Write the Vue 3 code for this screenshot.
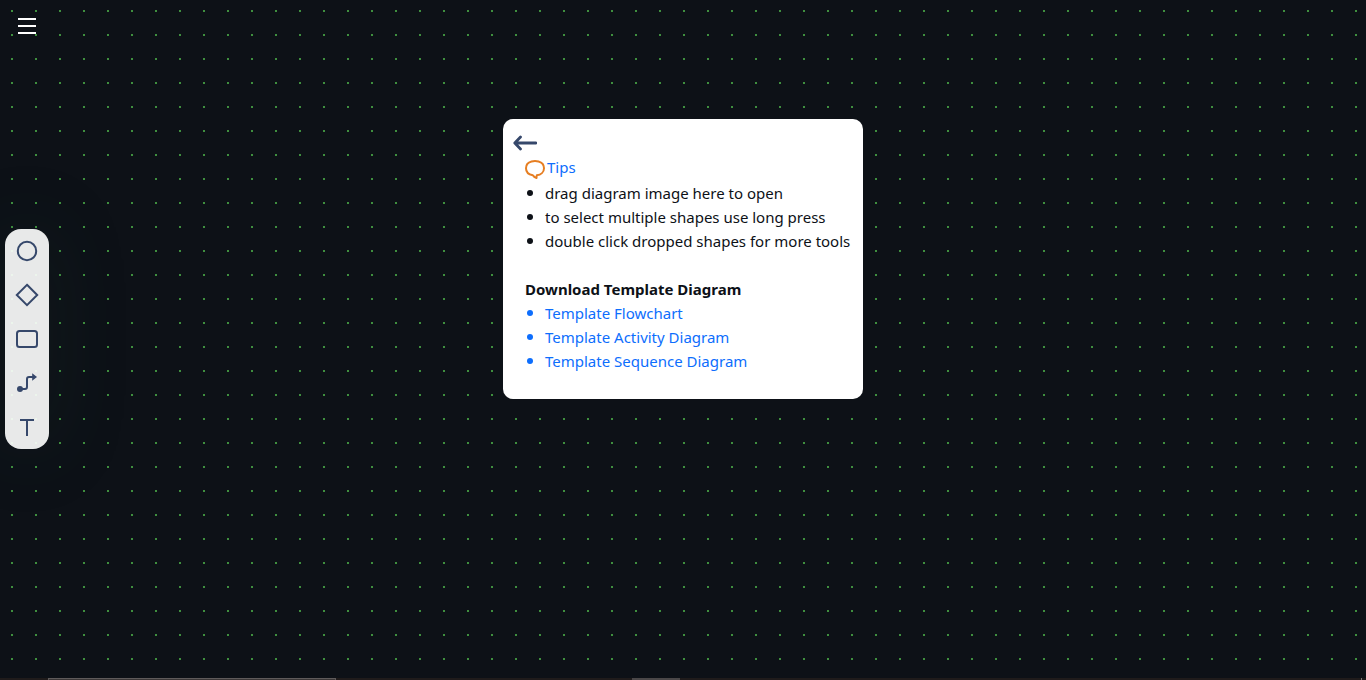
<script setup>
const tips = [
  'drag diagram image here to open',
  'to select multiple shapes use long press',
  'double click dropped shapes for more tools',
]
const templates = ['Template Flowchart', 'Template Activity Diagram', 'Template Sequence Diagram']
</script>

<template>
  <main class="canvas">
    <button class="menu" aria-label="Menu">
      <svg width="18" height="16" viewBox="0 0 18 16" fill="#fff">
        <rect width="18" height="2" /><rect y="7" width="18" height="2" /><rect y="14" width="18" height="2" />
      </svg>
    </button>

    <nav class="tools" aria-label="Shapes">
      <button aria-label="Circle">
        <svg viewBox="0 0 24 24"><circle cx="12" cy="12" r="9.2" /></svg>
      </button>
      <button aria-label="Diamond">
        <svg viewBox="0 0 24 24"><path d="M12 1.800 22.200 12 12 22.200 1.800 12Z" /></svg>
      </button>
      <button aria-label="Rectangle">
        <svg viewBox="0 0 24 24"><rect x="2" y="4" width="20" height="16" rx="2.5" /></svg>
      </button>
      <button aria-label="Connector">
        <svg viewBox="0 0 24 24">
          <circle class="solid" cx="5" cy="18" r="3" />
          <path d="M5 18H10Q12 18 12 16V8Q12 6 14 6H18" />
          <path class="solid" d="M17.200 2.200 22 6 17.200 9.800Z" />
        </svg>
      </button>
      <button aria-label="Text">
        <svg viewBox="0 0 24 24"><path d="M5 5H19M12 5V21" /></svg>
      </button>
    </nav>

    <section class="card">
      <button class="back" aria-label="Back">
        <svg width="24" height="16" viewBox="0 0 24 16">
          <path d="M7.500 2 1.800 8 7.500 14M2 8H23" fill="none" stroke="#36486b" stroke-width="2.800" stroke-linecap="round" stroke-linejoin="round" />
        </svg>
      </button>
      <h2 class="tips-title">
        <svg width="20" height="20" viewBox="0 0 20 20">
          <path d="M6.500 2.500Q10 1.700 13.500 2.500C17 3.500 19 6 19 9.200C19 13 15.800 15.800 11.800 16.300L11.500 19Q9 18.200 7.800 16.300C3.800 15.500 1 12.800 1 9.200C1 6 3 3.500 6.500 2.500Z" fill="none" stroke="#e67e22" stroke-width="2" stroke-linejoin="round" />
        </svg>
        <span>Tips</span>
      </h2>
      <ul class="list">
        <li v-for="tip in tips" :key="tip">{{ tip }}</li>
      </ul>
      <h3 class="download">Download Template Diagram</h3>
      <ul class="list links">
        <li v-for="name in templates" :key="name"><a href="#">{{ name }}</a></li>
      </ul>
    </section>

    <footer class="edge"><i class="search"></i><i class="active"></i><i class="peek"></i></footer>
  </main>
</template>

<style>
body {
  margin: 0;
  background: #0d1117;
}
</style>

<style scoped>
.canvas {
  box-sizing: border-box;
  position: relative;
  min-height: 100vh;
  overflow: hidden;
  background:
    linear-gradient(to right, transparent 2px, #0d1117 2px) 11px 10px / 24px 24px,
    linear-gradient(to bottom, #3f8f3f 2px, #0d1117 2px) 11px 10px / 24px 24px;
  color: #0d1117;
  font: 15px/24px "Segoe UI", "Noto Sans", "Open Sans", sans-serif;
}
button {
  display: flex;
  align-items: center;
  justify-content: center;
  padding: 0;
  border: 0;
  background: none;
  cursor: pointer;
}
.menu {
  position: absolute;
  top: 18px;
  left: 18px;
}
.tools {
  position: absolute;
  top: 229px;
  left: 5px;
  display: flex;
  flex-direction: column;
  border-radius: 16px;
  background: rgba(254, 255, 254, 0.91);
  box-shadow: 0 0 80px rgba(30, 70, 55, 0.2);
}
.tools button {
  width: 44px;
  height: 44px;
}
.tools svg {
  width: 24px;
  height: 24px;
  fill: none;
  stroke: #36486b;
  stroke-width: 2;
}
.tools .solid {
  fill: #36486b;
  stroke: none;
}
.card {
  box-sizing: border-box;
  width: 360px;
  margin: 119px auto 0;
  padding: 16px 8px 26px 10px;
  border-radius: 10px;
  background: #fff;
}
.tips-title {
  display: flex;
  align-items: center;
  gap: 2px;
  height: 24px;
  margin: 6px 0 0 12px;
  color: #0d6efd;
  font-size: 15px;
  font-weight: 400;
}
.tips-title span {
  margin-bottom: 4px;
}
.list {
  margin: 0;
  padding: 0 0 0 14px;
  list-style: none;
  white-space: nowrap;
}
.list li {
  display: flex;
  align-items: center;
  gap: 12px;
}
.list li::before {
  width: 6px;
  height: 6px;
  border-radius: 50%;
  background: currentColor;
  content: "";
}
.links,
.links a {
  color: #0d6efd;
  text-decoration: none;
}
.download {
  margin: 24px 0 0 12px;
  font-size: 15px;
  font-weight: 700;
}
.edge {
  position: absolute;
  right: 0;
  bottom: 0;
  left: 0;
  display: flex;
  height: 2px;
  padding: 0 4px 0 48px;
  background: #1f1b1b;
}
.search {
  box-sizing: border-box;
  width: 288px;
  border: 1px solid #5f5b5b;
  border-bottom: 0;
  background: #3b3737;
}
.active {
  width: 48px;
  margin-left: 296px;
  background: #4a4748;
}
.peek {
  width: 1px;
  margin-left: auto;
  background: #777;
}
</style>
